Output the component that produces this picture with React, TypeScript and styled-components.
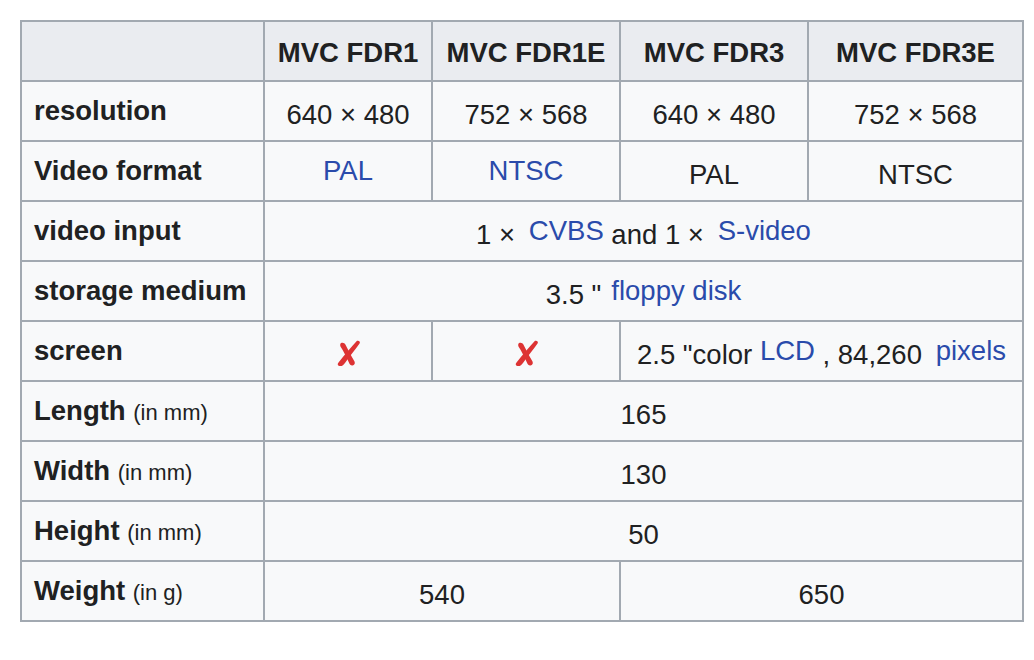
import styled, { createGlobalStyle } from "styled-components";

const GlobalStyle = createGlobalStyle`
  body {
    margin: 0;
    background: #fff;
    font-family: "Liberation Sans", Arial, sans-serif;
    color: #202122;
  }
`;

const models = ["MVC FDR1", "MVC FDR1E", "MVC FDR3", "MVC FDR3E"];
const colWidths = [243, 168, 188, 188, 215];

const Cross = () => (
  <SCross width="25" height="27" viewBox="0 0 24 26" aria-label="no">
    <path
      d="M20.2 0.8 C21.8 0.2 23.6 1.4 22.8 3.2 C19 8.8 13.6 15.4 8.8 21.8 C7.4 23.8 5.4 25.6 3.2 25 C1.4 24.6 1.2 23 2.4 21.6 C7.8 15.2 14.2 7.2 20.2 0.8 Z"
      fill="#dd3333"
    />
    <path
      d="M4.8 3 C6.4 2 8.2 2.8 9 4.4 C11.2 8.8 13.8 13.8 17.8 20.8 C18.6 22.6 17.8 24.4 15.8 24.6 C14.2 24.8 13.2 23.6 12.6 22.2 C9.8 15.8 7 10.6 4.4 6.6 C3.8 5.2 3.8 3.8 4.8 3 Z"
      fill="#dd3333"
    />
  </SCross>
);

export default function App() {
  return (
    <>
      <GlobalStyle />
      <SPage>
        <STable>
          <colgroup>
            {colWidths.map((w, i) => (
              <col key={i} style={{ width: w }} />
            ))}
          </colgroup>
          <thead>
            <tr>
              <SHead />
              {models.map((m) => (
                <SHead key={m}>{m}</SHead>
              ))}
            </tr>
          </thead>
          <tbody>
            <tr>
              <SLabel>resolution</SLabel>
              <SCell>640 × 480</SCell>
              <SCell>752 × 568</SCell>
              <SCell>640 × 480</SCell>
              <SCell>752 × 568</SCell>
            </tr>
            <tr>
              <SLabel>Video format</SLabel>
              <SCell>
                <SLink>PAL</SLink>
              </SCell>
              <SCell>
                <SLink>NTSC</SLink>
              </SCell>
              <SCell>PAL</SCell>
              <SCell>NTSC</SCell>
            </tr>
            <tr>
              <SLabel>video input</SLabel>
              <SCell colSpan={4}>
                1 ×{"\u2002"}
                <SLink>CVBS</SLink> and 1 ×{"\u2002"}
                <SLink>S-video</SLink>
              </SCell>
            </tr>
            <tr>
              <SLabel>storage medium</SLabel>
              <SCell colSpan={4}>
                3.5 "{" \u200A"}
                <SLink>floppy disk</SLink>
              </SCell>
            </tr>
            <tr>
              <SLabel>screen</SLabel>
              <SCell>
                <Cross />
              </SCell>
              <SCell>
                <Cross />
              </SCell>
              <SCell colSpan={2}>
                2.5 "color <SLink>LCD</SLink> , 84,260{"\u2002"}
                <SLink>pixels</SLink>
              </SCell>
            </tr>
            <tr>
              <SLabel>
                Length <SUnit>(in mm)</SUnit>
              </SLabel>
              <SCell colSpan={4}>165</SCell>
            </tr>
            <tr>
              <SLabel>
                Width <SUnit>(in mm)</SUnit>
              </SLabel>
              <SCell colSpan={4}>130</SCell>
            </tr>
            <tr>
              <SLabel>
                Height <SUnit>(in mm)</SUnit>
              </SLabel>
              <SCell colSpan={4}>50</SCell>
            </tr>
            <tr>
              <SLabel>
                Weight <SUnit>(in g)</SUnit>
              </SLabel>
              <SCell colSpan={2}>540</SCell>
              <SCell colSpan={2}>650</SCell>
            </tr>
          </tbody>
        </STable>
      </SPage>
    </>
  );
}

const SPage = styled.div`
  padding: 20px 0 0 20px;
`;

const STable = styled.table`
  border-collapse: collapse;
  table-layout: fixed;
  width: 1004px;
  background: #f8f9fa;
  border: 2px solid #a2a9b1;
  font-size: 27.5px;
  line-height: 1.3;
`;

const SHead = styled.th`
  height: 54px;
  padding: 4px 12px 0;
  background: #eaecf0;
  border: 2px solid #a2a9b1;
  font-weight: bold;
  text-align: center;
  vertical-align: middle;
  white-space: nowrap;
`;

const SLabel = styled.th`
  height: 58px;
  padding: 0 12px;
  border: 2px solid #a2a9b1;
  font-weight: bold;
  text-align: left;
  vertical-align: middle;
  white-space: nowrap;
`;

const SUnit = styled.span`
  font-size: 22px;
  font-weight: normal;
`;

const SCell = styled.td`
  height: 50px;
  padding: 8px 12px 0;
  border: 2px solid #a2a9b1;
  text-align: center;
  vertical-align: middle;
  white-space: nowrap;
`;

const SLink = styled.a`
  color: #2a4bab;
  text-decoration: none;
  position: relative;
  top: -4px;
`;

const SCross = styled.svg`
  display: inline-block;
  vertical-align: middle;
  position: relative;
  top: -3px;
`;
